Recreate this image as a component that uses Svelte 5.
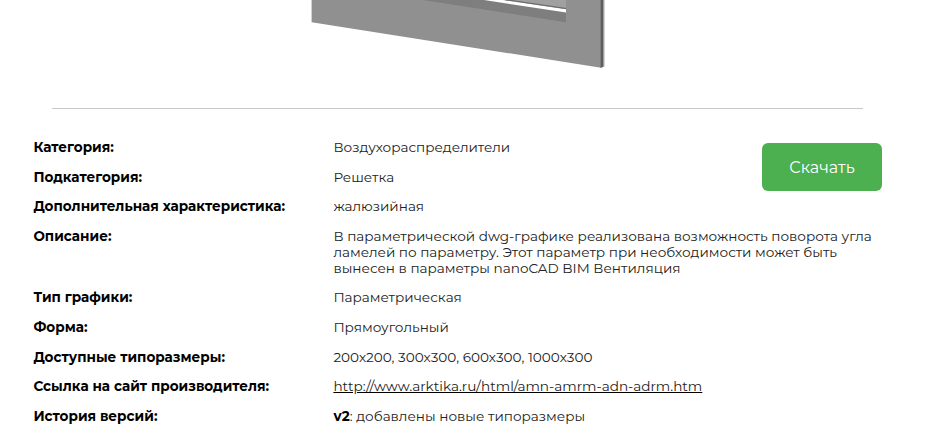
<script>
  const rows = [
    { label: 'Категория:', lines: ['Воздухораспределители'] },
    { label: 'Подкатегория:', lines: ['Решетка'] },
    { label: 'Дополнительная характеристика:', lines: ['жалюзийная'] },
    {
      label: 'Описание:',
      lines: [
        'В параметрической dwg-графике реализована возможность поворота угла',
        'ламелей по параметру. Этот параметр при необходимости может быть',
        'вынесен в параметры nanoCAD BIM Вентиляция'
      ]
    },
    { label: 'Тип графики:', lines: ['Параметрическая'] },
    { label: 'Форма:', lines: ['Прямоугольный'] },
    { label: 'Доступные типоразмеры:', lines: ['200х200, 300х300, 600х300, 1000х300'] },
    { label: 'Ссылка на сайт производителя:', href: 'http://www.arktika.ru/html/amn-amrm-adn-adrm.htm' },
    { label: 'История версий:', version: 'v2', lines: ['добавлены новые типоразмеры'] }
  ];
</script>

<main>
  <svg class="product" width="294" height="69" viewBox="0 0 294 69">
    <path d="M.6 0H290V67.7L.6 22.2Z" fill="#909090" />
    <path d="M289.6 0H292.6V66.8L289.6 67.9Z" fill="#5e5e5e" />
    <path d="M293 0V66.8" stroke="#999" stroke-width=".8" />
    <path d="M112 0H255V22.3Z" fill="#7e7e7e" />
    <path d="M190 0H255V9Z" fill="#a0a0a0" />
    <path d="M173 0H192L255 9.3V12.6Z" fill="#fff" />
    <path d="M194 -.4L255 8.5" stroke="#666" stroke-width="1.1" />
  </svg>
  <hr />
  <section>
    <dl>
      {#each rows as row}
        <div class="row">
          <dt>{row.label}</dt>
          <dd>
            {#if row.href}
              <a href={row.href}>{row.href}</a>
            {:else}
              {#each row.lines as line}
                <div class="line">{#if row.version}<b>{row.version}</b>:&nbsp;{/if}{line}</div>
              {/each}
            {/if}
          </dd>
        </div>
      {/each}
    </dl>
    <button>Скачать</button>
  </section>
</main>

<style>
  :global(body) {
    background: #fff;
    overflow: hidden;
  }
  main {
    height: 441px;
    overflow: hidden;
    font: 400 13.6px/16px Montserrat, 'Open Sans', sans-serif;
    color: #000;
  }
  .product {
    display: block;
    margin-left: 311px;
  }
  hr {
    width: 811px;
    height: 1px;
    margin: 39px 0 0 52px;
    border: 0;
    background: #c8c8c8;
  }
  section {
    display: flex;
    align-items: flex-start;
    padding: 30px 0 0 33.4px;
  }
  dl {
    flex: none;
    width: 848.6px;
    margin: 0 -120px 0 0;
  }
  .row {
    display: flex;
    padding-bottom: 13.6px;
  }
  dt {
    width: 300px;
    flex: none;
    font-weight: 700;
  }
  dd {
    margin: 0;
    white-space: nowrap;
    color: #222;
  }
  .line,
  dt,
  dd {
    min-height: 16px;
  }
  b {
    font-weight: 700;
    color: #000;
  }
  a {
    color: #222;
    text-decoration: underline #000;
  }
  button {
    width: 120px;
    height: 48px;
    margin: 4px 0 0;
    padding: 1px 0 0;
    border: 0;
    border-radius: 6px;
    background: #4caf50;
    color: #fff;
    font: 400 16px/20px Montserrat, 'Open Sans', sans-serif;
    flex: none;
  }
</style>
